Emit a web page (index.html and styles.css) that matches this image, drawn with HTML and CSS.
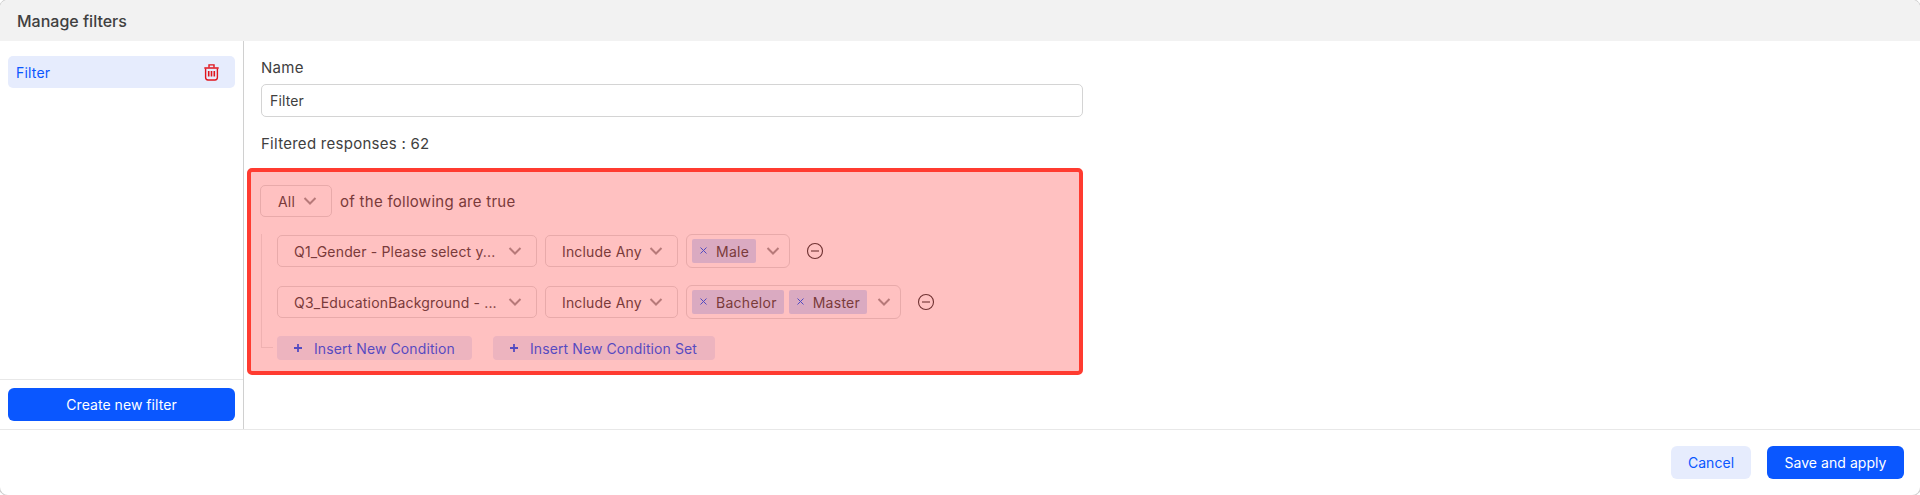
FILE: index.html
```html
<!DOCTYPE html>
<html lang="en">
<head>
<meta charset="utf-8">
<title>Manage filters</title>
<link rel="stylesheet" href="styles.css">
</head>
<body>
<div class="modal">
  <header class="modal-head">Manage filters</header>
  <div class="modal-body">
    <aside class="side">
      <div class="side-list">
        <div class="filter-item">
          <span>Filter</span>
          <svg class="trash" width="15" height="17" viewBox="0 0 15 17" fill="none" stroke="#e0141c" stroke-width="1.4">
            <path d="M0.3 4H14.7"/>
            <path d="M5 3.6V0.9H10V3.6"/>
            <path d="M1.6 4.4V13.6C1.6 15.1 2.5 16 4 16H11C12.5 16 13.4 15.1 13.4 13.6V4.4"/>
            <path d="M4.7 7V12.6M7.5 7V12.6M10.3 7V12.6" stroke-width="1.6"/>
          </svg>
        </div>
      </div>
      <div class="side-foot">
        <button class="btn btn-primary btn-wide">Create new filter</button>
      </div>
    </aside>
    <main class="main">
      <div class="field-label">Name</div>
      <div class="text-input">Filter</div>
      <div class="count">Filtered responses : 62</div>
      <section class="builder">
        <div class="builder-overlay"></div>
        <div class="match-row">
          <div class="select select-all"><span class="select-text">All</span><svg class="chev" width="14" height="8" viewBox="0 0 14 8"><path d="M1.5 1L7 6.5L12.5 1"/></svg></div>
          <span>of the following are true</span>
        </div>
        <div class="tree">
          <div class="cond">
            <div class="select select-q"><span class="select-text">Q1_Gender - Please select y...</span><svg class="chev" width="14" height="8" viewBox="0 0 14 8"><path d="M1.5 1L7 6.5L12.5 1"/></svg></div>
            <div class="select select-op"><span class="select-text">Include Any</span><svg class="chev" width="14" height="8" viewBox="0 0 14 8"><path d="M1.5 1L7 6.5L12.5 1"/></svg></div>
            <div class="multi">
              <span class="tag"><svg class="tag-x" width="7" height="7" viewBox="0 0 7 7"><path d="M0.5 0.5L6.5 6.5M6.5 0.5L0.5 6.5"/></svg>Male</span>
              <svg class="chev chev-multi" width="14" height="8" viewBox="0 0 14 8"><path d="M1.5 1L7 6.5L12.5 1"/></svg>
            </div>
            <svg class="minus" width="18" height="18" viewBox="0 0 18 18" fill="none" stroke="#333" stroke-width="1.1"><circle cx="9" cy="9" r="7.5"/><path d="M5 9H13"/></svg>
          </div>
          <div class="cond">
            <div class="select select-q"><span class="select-text">Q3_EducationBackground - ...</span><svg class="chev" width="14" height="8" viewBox="0 0 14 8"><path d="M1.5 1L7 6.5L12.5 1"/></svg></div>
            <div class="select select-op"><span class="select-text">Include Any</span><svg class="chev" width="14" height="8" viewBox="0 0 14 8"><path d="M1.5 1L7 6.5L12.5 1"/></svg></div>
            <div class="multi">
              <span class="tag"><svg class="tag-x" width="7" height="7" viewBox="0 0 7 7"><path d="M0.5 0.5L6.5 6.5M6.5 0.5L0.5 6.5"/></svg>Bachelor</span>
              <span class="tag"><svg class="tag-x" width="7" height="7" viewBox="0 0 7 7"><path d="M0.5 0.5L6.5 6.5M6.5 0.5L0.5 6.5"/></svg>Master</span>
              <svg class="chev chev-multi" width="14" height="8" viewBox="0 0 14 8"><path d="M1.5 1L7 6.5L12.5 1"/></svg>
            </div>
            <svg class="minus" width="18" height="18" viewBox="0 0 18 18" fill="none" stroke="#333" stroke-width="1.1"><circle cx="9" cy="9" r="7.5"/><path d="M5 9H13"/></svg>
          </div>
          <div class="actions">
            <button class="btn-insert btn-cond"><svg width="10" height="10" viewBox="0 0 10 10" stroke="#0a57ff" stroke-width="1.8"><path d="M5 1V9M1 5H9"/></svg>Insert New Condition</button>
            <button class="btn-insert btn-set"><svg width="10" height="10" viewBox="0 0 10 10" stroke="#0a57ff" stroke-width="1.8"><path d="M5 1V9M1 5H9"/></svg>Insert New Condition Set</button>
          </div>
        </div>
      </section>
    </main>
  </div>
  <footer class="modal-foot">
    <button class="btn btn-soft">Cancel</button>
    <button class="btn btn-primary btn-save">Save and apply</button>
  </footer>
</div>
</body>
</html>
```
FILE: styles.css
```css
* { box-sizing: border-box; }
html, body { margin: 0; height: 100%; background: #fff; }
body { font-family: Inter, "Liberation Sans", sans-serif; font-size: 14px; color: #404040; overflow: hidden; }
button { font: inherit; border: 0; cursor: pointer; }

.modal { height: 495px; display: flex; flex-direction: column; background: #fff; border-radius: 8px; overflow: hidden; box-shadow: 0 0 0 1px #cfcfcf; }
.modal-head { height: 41px; flex: none; background: #f2f2f2; padding: 0 17px; display: flex; align-items: center; font-size: 16px; font-weight: 500; }
.modal-body { height: 389px; flex: none; display: flex; border-bottom: 1px solid #e8e8e8; }

.side { width: 244px; flex: none; border-right: 1px solid #d0d0d0; display: flex; flex-direction: column; }
.side-list { flex: 1; padding: 15px 8px 0; }
.filter-item { height: 32px; width: 227px; padding: 0 16px 0 8px; background: #e6ecfd; border-radius: 5px; color: #0a57ff; display: flex; align-items: center; justify-content: space-between; letter-spacing: .2px; }
.side-foot { height: 50px; flex: none; border-top: 1px solid #e8e8e8; padding: 8px 8px 0; }

.btn { height: 33px; border-radius: 6px; font-size: 14px; font-weight: 400; letter-spacing: .05px; }
.btn-primary { background: #0a57ff; color: #fff; }
.btn-soft { background: #e6ecfd; color: #0a57ff; width: 80px; }
.btn-wide { width: 227px; }
.btn-save { width: 137px; }

.main { flex: 1; padding: 15px 0 0 17px; }
.field-label { font-size: 15px; line-height: 24px; height: 28px; letter-spacing: .3px; }
.text-input { width: 822px; height: 33px; border: 1px solid #d4d4d4; border-radius: 5px; padding: 0 8px; display: flex; align-items: center; letter-spacing: .15px; }
.count { font-size: 15px; line-height: 24px; margin-top: 15px; letter-spacing: .27px; }

.builder { position: relative; width: 822px; margin-top: 12px; padding-top: 17px; height: 207px; font-size: 15px; letter-spacing: .27px; }
.builder-overlay { position: absolute; left: -14px; top: 0; width: 836px; height: 207px; background: rgba(255, 50, 50, .3); border: 4px solid #ff3b30; border-radius: 5px; z-index: 2; }

.match-row { display: flex; align-items: center; gap: 8px; height: 32px; margin-left: -1px; }
.select { height: 32px; border: 1px solid #dedede; border-radius: 5px; display: flex; align-items: center; justify-content: space-between; font-size: 14px; letter-spacing: .17px; flex: none; }
.select-text { white-space: nowrap; }
.select-all { width: 72px; padding: 0 14px 0 17px; }
.select-q { width: 260px; padding: 0 14px 0 16px; }
.select-op { width: 133px; padding: 0 14px 0 16px; }
.chev { flex: none; fill: none; stroke: #999; stroke-width: 2; }

.tree { margin-top: 17px; padding-left: 16px; position: relative; }
.tree::before { content: ""; position: absolute; left: 0; top: 0; width: 11px; height: 113px; border-left: 1px solid #e8e8e8; border-bottom: 1px solid #e8e8e8; }
.cond { display: flex; align-items: center; gap: 8px; height: 34px; margin-bottom: 17px; }
.multi { height: 34px; border: 1px solid #dedede; border-radius: 6px; display: flex; align-items: center; gap: 5px; padding: 0 4px 0 5px; flex: none; }
.tag { height: 24px; background: #cbdfff; border-radius: 2px; padding: 0 7px 0 8px; display: flex; align-items: center; font-size: 14px; }
.tag-x { flex: none; fill: none; stroke: #0a57ff; stroke-width: 1; margin-right: 9px; margin-top: -2px; }
.chev-multi { margin: 0 5px; }
.minus { flex: none; margin-left: 8px; }

.actions { display: flex; gap: 21px; }
.btn-insert { height: 24px; border-radius: 4px; background: #e6ecfd; color: #0a57ff; font-size: 14px; letter-spacing: .1px; padding: 0 0 0 16px; display: flex; align-items: center; gap: 11px; white-space: nowrap; }
.btn-cond { width: 195px; }
.btn-set { width: 222px; }

.modal-foot { flex: 1; display: flex; justify-content: flex-end; align-items: flex-start; padding: 16px 16px 0 0; gap: 16px; }
```
